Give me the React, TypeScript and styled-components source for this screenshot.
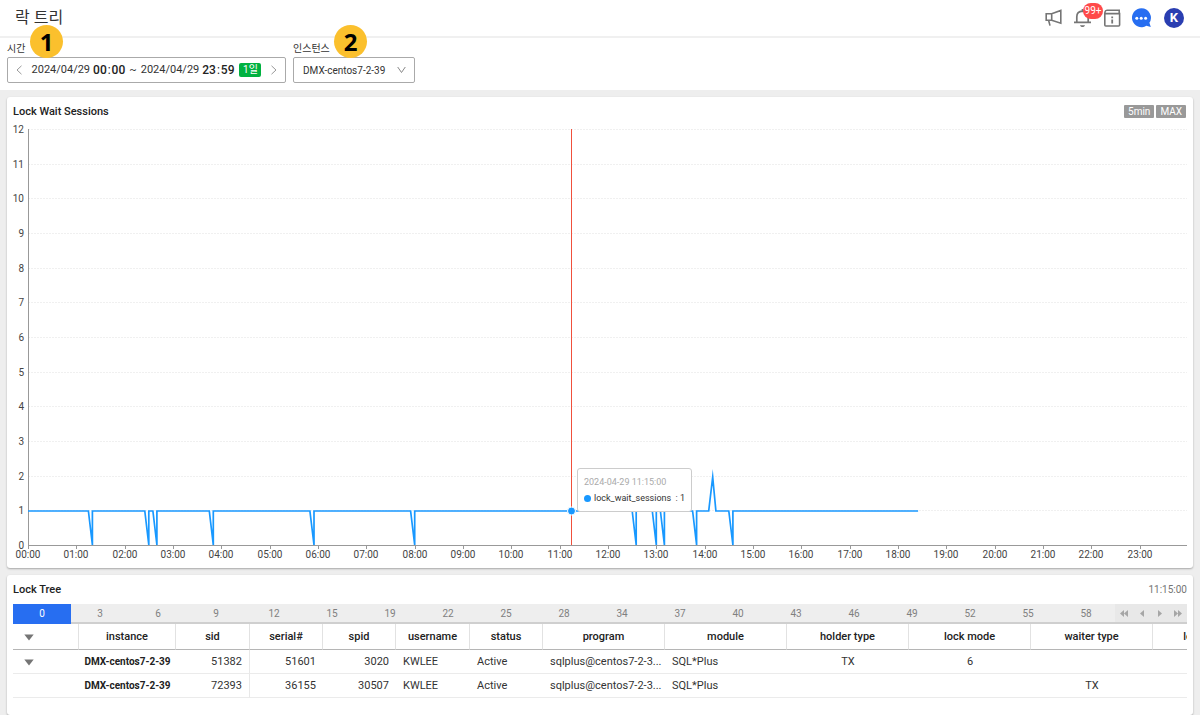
import React, { useEffect, useRef, useState } from 'react';
import styled, { createGlobalStyle } from 'styled-components';

const GlobalStyle = createGlobalStyle`
  *, *::before, *::after { box-sizing: border-box; }
  html, body, #root { height: 100%; }
  body {
    margin: 0;
    background: #eeeeee;
    color: #333333;
    font-family: Roboto, "Noto Sans CJK KR", sans-serif;
    font-size: 11px;
    overflow: hidden;
  }
  button, select { font: inherit; color: inherit; }
  button { border: 0; padding: 0; background: none; cursor: pointer; }
`;

const Page = styled.div`
  display: flex;
  flex-direction: column;
  height: 100%;
`;

/* ---------- header ---------- */

const Header = styled.header`
  display: flex;
  align-items: center;
  justify-content: space-between;
  flex: none;
  height: 38px;
  padding: 0 16px 0 15px;
  background: #ffffff;
  border-bottom: 2px solid #f0f0f0;
`;

const PageTitle = styled.h1`
  margin: 0;
  font-size: 16px;
  font-weight: 400;
  line-height: 24px;
`;

const HeaderActions = styled.div`
  display: flex;
  align-items: center;
  gap: 12px;
`;

const IconGroup = styled.div`
  display: flex;
  gap: 10px;
`;

const IconButton = styled.button`
  position: relative;
  display: block;
  width: 20px;
  height: 20px;
  color: #757575;

  svg { display: block; overflow: visible; }
`;

const AlertCount = styled.span`
  position: absolute;
  left: 11px;
  top: -5px;
  width: 20px;
  height: 16px;
  border-radius: 8px;
  background: #ff4a4a;
  color: #ffffff;
  font-size: 10px;
  line-height: 16px;
  text-align: center;
`;

const Avatar = styled.button`
  width: 20px;
  height: 20px;
  border-radius: 50%;
  background: #2a3eb1;
  color: #ffffff;
  font-size: 13px;
  font-weight: 700;
  line-height: 20px;
`;

/* ---------- filters ---------- */

const FilterBar = styled.div`
  display: flex;
  flex: none;
  gap: 7px;
  height: 52px;
  padding: 3px 7px 0;
  background: #ffffff;
`;

const Field = styled.div`
  position: relative;
`;

const FieldLabel = styled.label`
  display: block;
  height: 16px;
  font-size: 10px;
  line-height: 16px;
`;

const Marker = styled.span<{ $left: number }>`
  position: absolute;
  left: ${(p) => p.$left}px;
  top: -16px;
  width: 33px;
  height: 33px;
  border-radius: 50%;
  background: #fbc02d;
  color: #000000;
  font-family: "Noto Sans", sans-serif;
  font-size: 24px;
  font-weight: 700;
  line-height: 33px;
  text-align: center;
`;

const RangeBox = styled.div`
  display: flex;
  align-items: center;
  justify-content: space-between;
  width: 279px;
  height: 26px;
  padding: 0 6px;
  border: 1px solid #aaaaaa;
  border-radius: 2px;
`;

const StepButton = styled.button`
  display: flex;
  align-items: center;
  justify-content: center;
  width: 10px;
  height: 20px;
  color: #999999;
`;

const RangeValue = styled.button`
  display: flex;
  align-items: center;
  gap: 3px;
  line-height: 16px;
`;

const RangeDash = styled.span`
  padding: 0 1px;
`;

const Clock = styled.span`
  font-size: 12px;
  font-weight: 500;
  color: #222222;

  i { padding: 0 1px; font-style: normal; font-weight: 400; }
`;

const DayBadge = styled.span`
  width: 22px;
  height: 14px;
  margin-left: 2px;
  border-radius: 2px;
  background: #00b140;
  color: #ffffff;
  font-size: 10px;
  line-height: 14px;
  text-align: center;
`;

const SelectBox = styled.div`
  position: relative;
  width: 122px;

  svg { position: absolute; right: 9px; top: 9px; pointer-events: none; color: #888888; }
`;

const Select = styled.select`
  display: block;
  width: 100%;
  height: 26px;
  padding: 0 24px 0 9px;
  border: 1px solid #aaaaaa;
  border-radius: 2px;
  background: #ffffff;
  appearance: none;
  font-size: 10px;
`;

/* ---------- panels ---------- */

const Main = styled.main`
  display: flex;
  flex-direction: column;
  flex: 1;
  gap: 7px;
  min-height: 0;
  padding: 7px 7px 0;
`;

const Panel = styled.section<{ $fill?: boolean }>`
  flex: ${(p) => (p.$fill ? '1' : 'none')};
  min-height: 0;
  padding: 4px 6px;
  border-radius: 3px;
  background: #ffffff;
  box-shadow: 0 1px 2px rgba(0, 0, 0, 0.3);
`;

const PanelHead = styled.div`
  display: flex;
  align-items: center;
  justify-content: space-between;
  height: 20px;
`;

const PanelTitle = styled.h2`
  margin: 0;
  color: #222222;
  font-size: 11px;
  font-weight: 500;
`;

const Tags = styled.div`
  display: flex;
  gap: 2px;
  padding: 1px 1px 0 0;
`;

const Tag = styled.span`
  padding: 0 4px;
  border-radius: 1px;
  background: #999999;
  color: #ffffff;
  font-size: 10px;
  line-height: 13px;
`;

const TimeText = styled.span`
  color: #757575;
  font-size: 10px;
`;

/* ---------- chart ---------- */

const ChartBox = styled.div`
  position: relative;
  height: 443px;

  svg { display: block; width: 100%; }
`;

const AxisText = styled.text`
  fill: #444444;
  font-size: 10px;
`;

const Tooltip = styled.div`
  position: absolute;
  top: 347px;
  height: 44px;
  padding: 5px 6px;
  border: 1px solid #cccccc;
  border-radius: 3px;
  background: #ffffff;
  font-size: 9px;
  line-height: 16px;
  white-space: nowrap;
`;

const TooltipTime = styled.div`
  color: #aaaaaa;
`;

const TooltipRow = styled.div`
  display: flex;
  align-items: center;
  gap: 3px;
`;

const Dot = styled.span`
  width: 7px;
  height: 7px;
  border-radius: 50%;
  background: #1898ff;
`;

const PLOT_LEFT = 15;
const PLOT_TOP = 8;
const PLOT_HEIGHT = 416;
const MAX_VALUE = 12;
const DIPS = [80, 150, 160, 230, 355, 480, 755, 780, 790, 830, 875];
const PEAK = 850;
const LAST = 1105;
const CURSOR = 675;

const yOf = (v: number) => PLOT_TOP + PLOT_HEIGHT - (v / MAX_VALUE) * PLOT_HEIGHT;

function seriesPoints(): Array<[number, number]> {
  const points: Array<[number, number]> = [[0, 1]];
  [...DIPS, PEAK]
    .sort((a, b) => a - b)
    .forEach((t) => {
      points.push([t - 5, 1]);
      if (t === PEAK) points.push([t, 2], [t + 4, 1]);
      else points.push([t, 0], [t, 1]);
    });
  points.push([LAST, 1]);
  return points;
}

function LockWaitChart() {
  const box = useRef<HTMLDivElement>(null);
  const [width, setWidth] = useState(1174);

  useEffect(() => {
    const el = box.current;
    if (!el) return;
    const observer = new ResizeObserver(() => setWidth(el.clientWidth));
    observer.observe(el);
    return () => observer.disconnect();
  }, []);

  const xOf = (minute: number) => PLOT_LEFT + (minute / 1440) * (width + 1 - PLOT_LEFT);
  const line = seriesPoints()
    .map(([m, v]) => `${xOf(m).toFixed(1)},${(Math.round(yOf(v)) + (v ? 1 : 0)).toFixed(1)}`)
    .join(' ');
  const values = Array.from({ length: MAX_VALUE + 1 }, (_, i) => i);
  const hours = Array.from({ length: 24 }, (_, i) => i);
  const cursorX = Math.floor(xOf(CURSOR));

  return (
    <ChartBox ref={box}>
      <svg height="443" role="img" aria-label="Lock wait sessions by time" overflow="visible">
        {values.slice(1).map((v) => (
          <line
            key={v}
            x1={PLOT_LEFT}
            x2={width}
            y1={Math.round(yOf(v)) + 0.5}
            y2={Math.round(yOf(v)) + 0.5}
            stroke="#f0f0f0"
            strokeDasharray="2 1"
          />
        ))}
        <path
          d={`M${PLOT_LEFT + 0.5} ${PLOT_TOP}V${PLOT_TOP + PLOT_HEIGHT + 0.5}H${width}`}
          fill="none"
          stroke="#999999"
        />
        {hours.map((h) => {
          const x = Math.round(xOf(h * 60));
          return (
            <g key={h}>
              <line x1={x + 0.5} x2={x + 0.5} y1={yOf(0)} y2={yOf(0) + 4} stroke="#999999" />
              <AxisText x={x} y={yOf(0) + 13} textAnchor="middle">
                {`${String(h).padStart(2, '0')}:00`}
              </AxisText>
            </g>
          );
        })}
        {values.map((v) => (
          <AxisText key={v} x={11} y={Math.round(yOf(v)) + 4} textAnchor="end">
            {v}
          </AxisText>
        ))}
        <polyline points={line} fill="none" stroke="#1898ff" strokeWidth="1.7" strokeMiterlimit="10" />
        <line x1={cursorX + 0.5} x2={cursorX + 0.5} y1={PLOT_TOP} y2={yOf(0)} stroke="#f0503c" />
        <circle cx={cursorX + 0.5} cy={Math.round(yOf(1)) + 1} r="4" fill="#1898ff" stroke="#ffffff" />
      </svg>
      <Tooltip style={{ left: cursorX + 6 }}>
        <TooltipTime>2024-04-29 11:15:00</TooltipTime>
        <TooltipRow>
          <Dot />
          <span>lock_wait_sessions&nbsp; : 1</span>
        </TooltipRow>
      </Tooltip>
    </ChartBox>
  );
}

/* ---------- lock tree ---------- */

const TabRow = styled.div`
  display: flex;
  height: 20px;
  margin-top: 5px;
  border-bottom: 2px solid #cfcfcf;
  background: #eeeeee;
`;

const MinuteTab = styled.button<{ $active?: boolean }>`
  flex: 1;
  height: ${(p) => (p.$active ? 20 : 18)}px;
  padding-bottom: ${(p) => (p.$active ? 2 : 0)}px;
  background: ${(p) => (p.$active ? '#276ef1' : 'transparent')};
  color: ${(p) => (p.$active ? '#ffffff' : '#808080')};
  font-size: 10px;
`;

const Pager = styled.div`
  display: flex;
  width: 72px;
  background: #e8e8e8;
`;

const PagerButton = styled.button`
  display: flex;
  flex: 1;
  align-items: center;
  justify-content: center;
  padding-top: 1px;
  color: #a6a6a6;
`;

const TableWrap = styled.div`
  overflow: hidden;
`;

const Table = styled.table`
  width: 1262px;
  table-layout: fixed;
  border-collapse: separate;
  border-spacing: 0;
`;

const Col = styled.col<{ $width: number }>`
  width: ${(p) => p.$width}px;
`;

const Th = styled.th`
  height: 26px;
  padding: 0 3px;
  border-right: 1px solid #e2e2e2;
  border-bottom: 1px solid #b5b5b5;
  color: #222222;
  font-size: 11px;
  font-weight: 500;
  text-align: center;

  &:first-child { padding: 0; }
`;

const Td = styled.td<{ $align?: string; $strong?: boolean; $divider?: boolean }>`
  height: 24px;
  padding: 0 ${(p) => (p.$align === 'right' ? 7 : 3)}px 0 ${(p) => (p.$align ? 3 : 7)}px;
  border-right: ${(p) => (p.$divider ? '1px solid #e8e8e8' : '0')};
  border-bottom: 1px solid #ebebeb;
  font-size: ${(p) => (p.$strong ? 10 : 11)}px;
  font-weight: ${(p) => (p.$strong ? 700 : 400)};
  color: ${(p) => (p.$strong ? '#222222' : '#333333')};
  text-align: ${(p) => p.$align || 'left'};
  overflow: hidden;
  text-overflow: ellipsis;
  white-space: nowrap;

  &:first-child { padding: 0; }
`;

const Toggle = styled.button`
  display: block;
  width: 32px;
  height: 16px;

  svg { display: block; margin: 0 auto; }
`;

interface Column {
  name: string;
  width: number;
  align?: string;
  strong?: boolean;
  divider?: boolean;
}

const COLUMNS: Column[] = [
  { name: 'instance', width: 97, align: 'center', strong: true },
  { name: 'sid', width: 74, align: 'right', divider: true },
  { name: 'serial#', width: 73, align: 'right' },
  { name: 'spid', width: 73, align: 'right' },
  { name: 'username', width: 74 },
  { name: 'status', width: 73 },
  { name: 'program', width: 122 },
  { name: 'module', width: 122 },
  { name: 'holder type', width: 122, align: 'center' },
  { name: 'lock mode', width: 122, align: 'center' },
  { name: 'waiter type', width: 122, align: 'center' },
  { name: 'lock request', width: 122 },
];

const ROWS = [
  ['DMX-centos7-2-39', '51382', '51601', '3020', 'KWLEE', 'Active', 'sqlplus@centos7-2-39', 'SQL*Plus', 'TX', '6', '', ''],
  ['DMX-centos7-2-39', '72393', '36155', '30507', 'KWLEE', 'Active', 'sqlplus@centos7-2-39', 'SQL*Plus', '', '', 'TX', ''],
].map((row) => row.map((cell) => (cell.startsWith('sqlplus') ? `${cell.slice(0, -1)}...` : cell)));

const MINUTES = [0, 3, 6, 9, 12, 15, 19, 22, 25, 28, 34, 37, 40, 43, 46, 49, 52, 55, 58];

const PAGER = [
  { label: 'First', d: 'M4 0V7L0 3.5ZM8 0V7L4 3.5Z' },
  { label: 'Previous', d: 'M6 0V7L2 3.5Z' },
  { label: 'Next', d: 'M2 0V7L6 3.5Z' },
  { label: 'Last', d: 'M0 0V7L4 3.5ZM4 0V7L8 3.5Z' },
];

function ToggleArrow({ label }: { label: string }) {
  return (
    <Toggle aria-label={label}>
      <svg width="10" height="16" viewBox="0 0 10 16">
        <path d="M0.3 5.5H9.7L5 11.5Z" fill="#757575" />
      </svg>
    </Toggle>
  );
}

function LockTree() {
  return (
    <>
      <TabRow>
        {MINUTES.map((m) => (
          <MinuteTab key={m} $active={m === 0}>{m}</MinuteTab>
        ))}
        <Pager>
          {PAGER.map((p) => (
            <PagerButton key={p.label} aria-label={p.label}>
              <svg width="8" height="7" viewBox="0 0 8 7">
                <path d={p.d} fill="currentColor" />
              </svg>
            </PagerButton>
          ))}
        </Pager>
      </TabRow>
      <TableWrap>
        <Table>
          <colgroup>
            <Col $width={66} />
            {COLUMNS.map((c) => <Col key={c.name} $width={c.width} />)}
          </colgroup>
          <thead>
            <tr>
              <Th><ToggleArrow label="Collapse all" /></Th>
              {COLUMNS.map((c) => <Th key={c.name} scope="col">{c.name}</Th>)}
            </tr>
          </thead>
          <tbody>
            {ROWS.map((row, r) => (
              <tr key={r}>
                <Td>{r === 0 && <ToggleArrow label="Collapse" />}</Td>
                {COLUMNS.map((c, i) => (
                  <Td key={c.name} $align={c.align} $strong={c.strong} $divider={c.divider}>
                    {row[i]}
                  </Td>
                ))}
              </tr>
            ))}
          </tbody>
        </Table>
      </TableWrap>
    </>
  );
}

/* ---------- page ---------- */

export default function App() {
  return (
    <Page>
      <GlobalStyle />
      <Header>
        <PageTitle>락 트리</PageTitle>
        <HeaderActions>
          <IconGroup>
            <IconButton aria-label="Announcements">
              <svg width="20" height="20" viewBox="0 0 20 20" fill="none" stroke="currentColor" strokeWidth="1.6">
                <path d="M4.2 5.8H9.7L18.8 2.4V15.2L9.7 12.2H4.2ZM9.7 5.8V12.2M6.6 12.2L8 17.6" />
              </svg>
            </IconButton>
            <IconButton aria-label="Alerts">
              <svg width="20" height="20" viewBox="0 0 20 20" fill="none" stroke="currentColor" strokeWidth="1.7">
                <path d="M2 14.4H19M4.8 14.4V8.8C4.8 5.4 7.2 3.4 10.5 3.2C13.8 3.4 16.2 5.4 16.2 8.8V14.4M10.5 3.4V1" />
                <path d="M8 17.2H13C12.6 19.6 8.4 19.6 8 17.2Z" fill="currentColor" stroke="none" />
              </svg>
              <AlertCount>99+</AlertCount>
            </IconButton>
            <IconButton aria-label="Release notes">
              <svg width="20" height="20" viewBox="0 0 20 20" fill="none" stroke="currentColor" strokeWidth="1.6">
                <path d="M2.8 5.6H17.6V17A1 1 0 0 1 16.6 18H3.8A1 1 0 0 1 2.8 17ZM2.8 5.6L3 4A2 2 0 0 1 5 2.2H17.2V5.6" />
                <path d="M10.2 8.6V10.2M10.2 11.4V15.6" strokeWidth="1.8" />
              </svg>
            </IconButton>
            <IconButton aria-label="Chat">
              <svg width="20" height="20" viewBox="0 0 20 20">
                <path d="M9.4 0.2A9.5 9.5 0 1 0 14.4 17.8L18.8 19L17.4 14.8A9.5 9.5 0 0 0 9.4 0.2Z" fill="#276ef1" />
                <circle cx="4.8" cy="10.2" r="1.5" fill="#ffffff" />
                <circle cx="9.2" cy="10.2" r="1.5" fill="#ffffff" />
                <circle cx="13.6" cy="10.2" r="1.5" fill="#ffffff" />
              </svg>
            </IconButton>
          </IconGroup>
          <Avatar aria-label="Account">K</Avatar>
        </HeaderActions>
      </Header>

      <FilterBar>
        <Field>
          <FieldLabel htmlFor="range">시간</FieldLabel>
          <RangeBox>
            <StepButton aria-label="Previous day">
              <svg width="6" height="10" viewBox="0 0 6 10" fill="none" stroke="currentColor">
                <path d="M5.5 0.8L1 5L5.5 9.2" />
              </svg>
            </StepButton>
            <RangeValue id="range">
              <span>2024/04/29</span>
              <Clock>00<i>:</i>00</Clock>
              <RangeDash>~</RangeDash>
              <span>2024/04/29</span>
              <Clock>23<i>:</i>59</Clock>
              <DayBadge>1일</DayBadge>
            </RangeValue>
            <StepButton aria-label="Next day">
              <svg width="6" height="10" viewBox="0 0 6 10" fill="none" stroke="currentColor">
                <path d="M0.5 0.8L5 5L0.5 9.2" />
              </svg>
            </StepButton>
          </RangeBox>
          <Marker $left={23}>1</Marker>
        </Field>
        <Field>
          <FieldLabel htmlFor="instance">인스턴스</FieldLabel>
          <SelectBox>
            <Select id="instance" defaultValue="DMX-centos7-2-39">
              <option>DMX-centos7-2-39</option>
            </Select>
            <svg width="9" height="8" viewBox="0 0 9 8" fill="none" stroke="currentColor">
              <path d="M0.7 1L4.5 6.5L8.3 1" />
            </svg>
          </SelectBox>
          <Marker $left={41}>2</Marker>
        </Field>
      </FilterBar>

      <Main>
        <Panel>
          <PanelHead>
            <PanelTitle>Lock Wait Sessions</PanelTitle>
            <Tags>
              <Tag>5min</Tag>
              <Tag>MAX</Tag>
            </Tags>
          </PanelHead>
          <LockWaitChart />
        </Panel>
        <Panel $fill>
          <PanelHead>
            <PanelTitle>Lock Tree</PanelTitle>
            <TimeText>11:15:00</TimeText>
          </PanelHead>
          <LockTree />
        </Panel>
      </Main>
    </Page>
  );
}
